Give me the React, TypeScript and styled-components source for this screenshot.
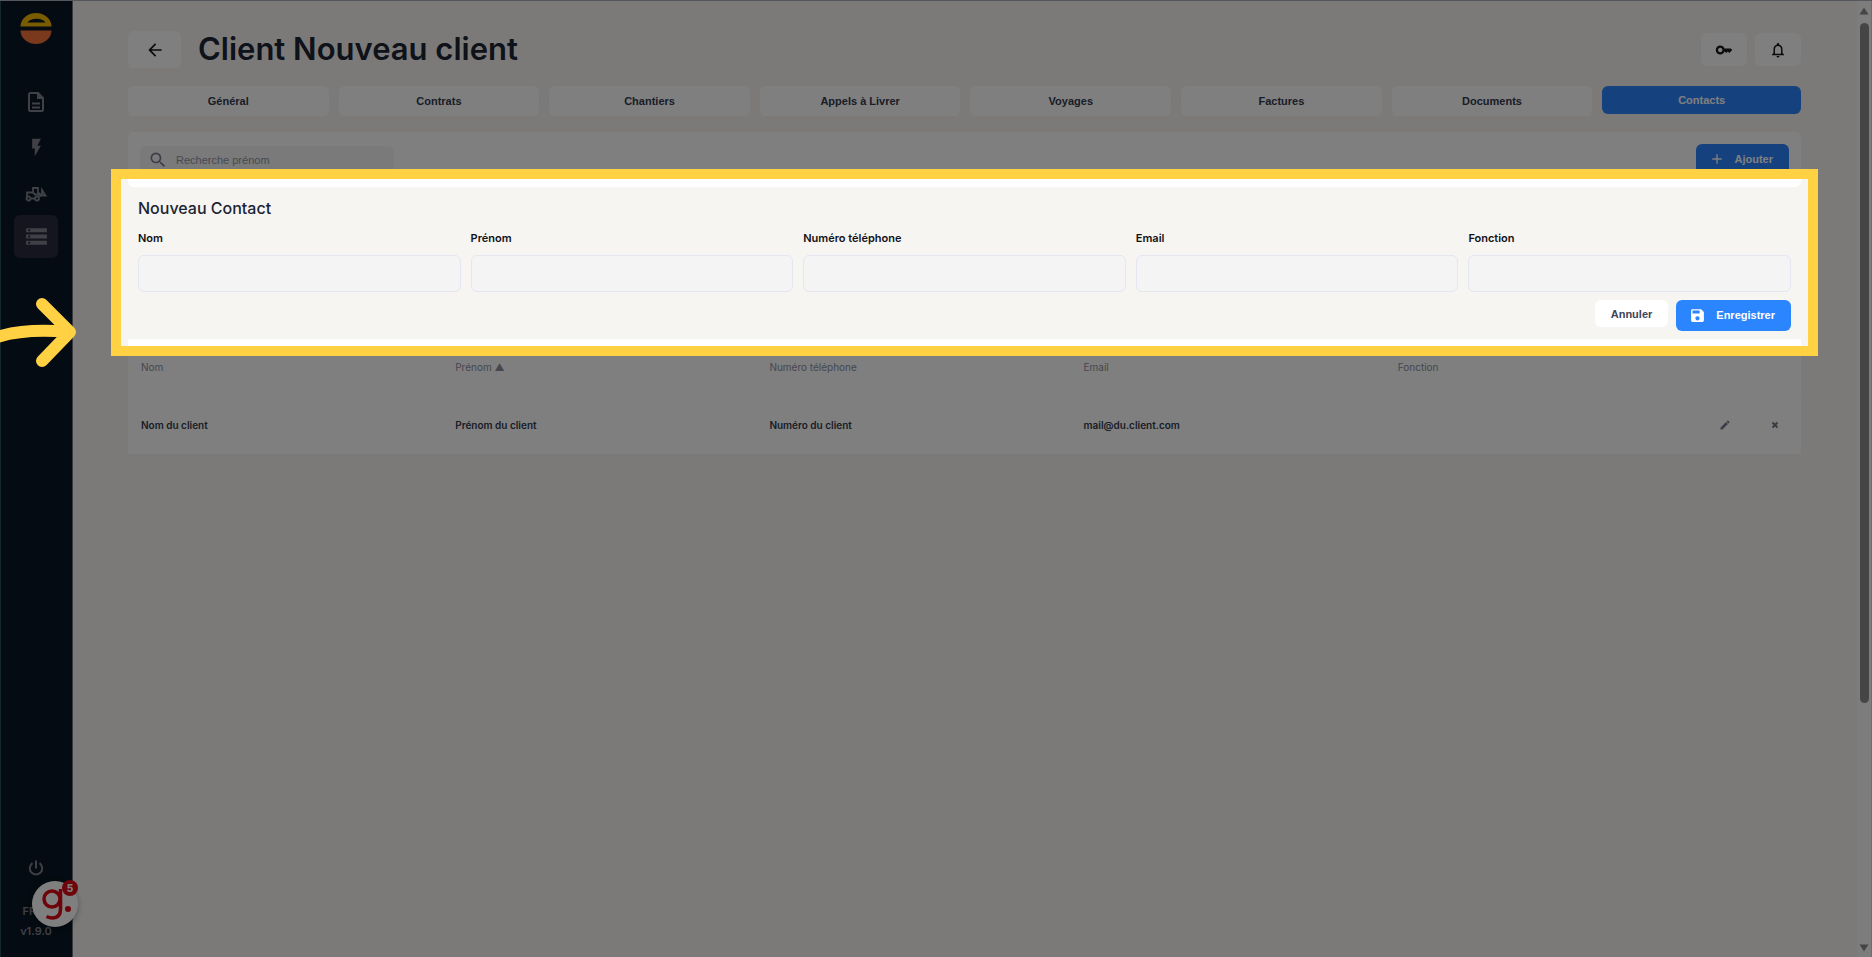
import React from "react";
import styled, { createGlobalStyle, css } from "styled-components";
import {
  MdAdd,
  MdArrowBack,
  MdEdit,
  MdFlashOn,
  MdKey,
  MdOutlineNotifications,
  MdSave,
  MdSearch,
  MdStorage,
} from "react-icons/md";

const INTER = `Inter, "Liberation Sans", sans-serif`;
const ARIAL = `"Liberation Sans", Arial, sans-serif`;

const GlobalStyle = createGlobalStyle`
  *, *::before, *::after { box-sizing: border-box; }
  body { margin: 0; background: #f7f5f1; font-family: ${INTER}; color: #1c2434; overflow: hidden; }
  button, input { font: inherit; color: inherit; margin: 0; }
  button { border: 0; padding: 0; cursor: pointer; }
  h1, h2 { margin: 0; }
`;

const Shell = styled.div`
  position: relative;
  display: flex;
  min-height: 100vh;
  overflow: hidden;
  border-top: 1px solid #54575c;
`;

const Sidebar = styled.nav`
  display: flex;
  flex-direction: column;
  align-items: center;
  flex: 0 0 73px;
  padding: 12px 1px 16px 0;
  background: #081724;
  border-left: 1px solid #245058;
  border-right: 1px solid #70757b;
  color: #80808f;
`;

const NavList = styled.div`
  display: flex;
  flex-direction: column;
  align-items: center;
  margin-top: 36px;
`;

const NavLink = styled.a<{ $active?: boolean }>`
  display: flex;
  align-items: center;
  justify-content: center;
  width: 44px;
  height: 43px;
  margin-top: ${(p) => (p.$active ? 0 : 3)}px;
  border-radius: 6px;
  color: inherit;
  background: ${(p) => (p.$active ? "#282a3c" : "transparent")};
  &:first-child { margin-top: 0; }
`;

const SidebarFoot = styled.div`
  display: flex;
  flex-direction: column;
  align-items: center;
  margin-top: auto;
  font-size: 11px;
  line-height: 20px;
  font-weight: 600;
`;

const PowerButton = styled.button`
  display: flex;
  margin-bottom: 24px;
  background: none;
`;

const Language = styled.span`
  width: 27px;
`;

const Main = styled.main`
  flex: 1;
  min-width: 0;
  padding: 30px 56px 0 55px;
`;

const Header = styled.header`
  display: flex;
  align-items: center;
  height: 37px;
  margin-bottom: 18px;
`;

const Title = styled.h1`
  flex: 1;
  margin-left: 17px;
  padding-bottom: 2px;
  font-size: 31px;
  line-height: 36px;
  font-weight: 600;
`;

const IconButton = styled.button<{ $wide?: boolean }>`
  display: flex;
  align-items: center;
  justify-content: center;
  width: ${(p) => (p.$wide ? 53 : 46)}px;
  height: ${(p) => (p.$wide ? 37 : 33)}px;
  margin-left: ${(p) => (p.$wide ? 0 : 8)}px;
  border-radius: 6px;
  background: #fff;
  color: #16181c;
`;

const Tabs = styled.div`
  display: grid;
  grid-template-columns: repeat(7, 201fr) 199fr;
  align-items: start;
  gap: 10px;
  margin-bottom: 16px;
`;

const Tab = styled.button<{ $active?: boolean }>`
  height: ${(p) => (p.$active ? 28 : 30)}px;
  border-radius: 6px;
  font: bold 11px/16px ${ARIAL};
  background: ${(p) => (p.$active ? "#2a85ff" : "#fff")};
  color: ${(p) => (p.$active ? "#fff" : "#333a4e")};
`;

const Toolbar = styled.div`
  display: flex;
  align-items: flex-start;
  justify-content: space-between;
  height: 55px;
  padding: 12px;
  border-radius: 6px;
  background: #fff;
`;

const Search = styled.label`
  display: flex;
  align-items: center;
  gap: 8px;
  width: 254px;
  height: 28px;
  margin-top: 2px;
  padding-left: 8px;
  border-radius: 6px;
  background: #f4f4f4;
  color: #777c8c;
`;

const SearchInput = styled.input`
  flex: 1;
  min-width: 0;
  padding: 0;
  border: 0;
  background: none;
  font: 11px/16px ${ARIAL};
  &::placeholder { color: #8c93a3; opacity: 1; }
`;

const button = css`
  display: flex;
  align-items: center;
  justify-content: center;
  border-radius: 6px;
  font: bold 11px/16px ${ARIAL};
`;

const PrimaryButton = styled.button`
  ${button}
  gap: 10px;
  height: 31px;
  padding: 0 16px 1px 13px;
  background: #2a85ff;
  color: #fff;
`;

const PlainButton = styled.button`
  ${button}
  height: 27px;
  padding: 0 16px;
  background: #fff;
  color: #404358;
`;

const FormSection = styled.form`
  position: relative;
  z-index: 1;
  padding: 11px 10px 8px;
  background: #f6f5f1;
`;

const FormTitle = styled.h2`
  font-size: 16px;
  line-height: 20px;
  font-weight: 500;
`;

const Fields = styled.div`
  display: grid;
  grid-template-columns: repeat(5, 1fr);
  gap: 10px;
  margin-top: 12px;
`;

const Field = styled.label`
  display: flex;
  flex-direction: column;
  gap: 9px;
  font-size: 11px;
  line-height: 16px;
  font-weight: 600;
  color: #111217;
`;

const TextInput = styled.input`
  width: 100%;
  height: 37px;
  padding: 0 10px;
  border: 1px solid #e4e6f1;
  border-radius: 6px;
  background: #f4f4f4;
`;

const Actions = styled.div`
  display: flex;
  align-items: flex-start;
  justify-content: flex-end;
  gap: 8px;
  margin-top: 8px;
`;

const Spotlight = styled.div`
  position: absolute;
  inset: -18px -17px -17px;
  border: 10px solid #ffd143;
  box-shadow: 0 0 0 9999px rgba(0, 0, 0, 0.5);
  pointer-events: none;
`;

const Contacts = styled.table`
  width: 100%;
  border-collapse: collapse;
  table-layout: fixed;
  background: #fff;
  text-align: left;
`;

const HeadCell = styled.th`
  height: 57px;
  padding: 0 13px;
  border-bottom: 1px solid #fcfcfd;
  font-size: 10px;
  line-height: 16px;
  font-weight: 400;
  color: #8a8f9e;
`;

const ActionHead = styled(HeadCell)`
  width: 102px;
`;

const Cell = styled.td`
  height: 58px;
  padding: 0 13px;
  font-size: 10px;
  line-height: 16px;
  font-weight: 600;
  color: #333a4e;
`;

const RowActions = styled.div`
  display: flex;
  align-items: center;
  justify-content: space-between;
  padding: 0 8px 0 7px;
`;

const RowButton = styled.button`
  display: flex;
  background: none;
  color: #75778b;
`;

const Scrollbar = styled.div`
  display: flex;
  flex-direction: column;
  align-items: center;
  flex: 0 0 15px;
  padding: 6px 0 5px;
  border-right: 1px solid #d8d8e4;
  background: #fafafa;
`;

const Thumb = styled.div`
  flex: 0 0 72%;
  width: 9px;
  margin-top: 8px;
  border-radius: 5px;
  background: #8b8b8b;
`;

const ScrollArrow = styled.svg<{ $bottom?: boolean }>`
  flex: none;
  margin-top: ${(p) => (p.$bottom ? "auto" : 0)};
  fill: #8b8b8b;
`;

const Pointer = styled.svg`
  position: absolute;
  z-index: 2;
  left: 0;
  top: 296px;
  pointer-events: none;
`;

const ChatBubble = styled.button`
  position: absolute;
  left: 32px;
  bottom: 30px;
  width: 46px;
  height: 46px;
  border-radius: 50%;
  background: #fff;
  box-shadow: 0 2px 6px rgba(0, 0, 0, 0.3);
`;

const Badge = styled.span`
  position: absolute;
  top: -1px;
  right: 0;
  width: 16px;
  height: 16px;
  border-radius: 50%;
  background: #dc0814;
  color: #fff;
  font: 800 10px/16px ${INTER};
  text-align: center;
`;

const Logo = () => (
  <svg width="32" height="31" viewBox="0 0 32 31" aria-hidden="true">
    <path d="M.5 13.500a15.500 13.500 0 0 1 31 0zM7.500 9.500h18a10 6.500 0 0 0-18 0z" fill="#f5b800" fillRule="evenodd" />
    <path d="M.5 17.500h31a15.500 13.500 0 0 1-31 0z" fill="#f47238" />
  </svg>
);

const DocumentIcon = () => (
  <svg width="18" height="22" viewBox="0 0 18 22" fill="none" stroke="currentColor" strokeWidth="2" aria-hidden="true">
    <path d="M3.500 2H11l5 5v11.500a1.500 1.500 0 0 1-1.500 1.500h-11A1.500 1.500 0 0 1 2 18.500v-15A1.500 1.500 0 0 1 3.500 2zM5 12.500h8M5 16.500h8" />
    <path d="M10 1v7h7z" fill="currentColor" stroke="none" />
  </svg>
);

const LoaderIcon = () => (
  <svg width="22" height="16" viewBox="0 0 22 16" fill="none" stroke="currentColor" strokeWidth="1.800" aria-hidden="true">
    <path d="M5.500 12.500h4M2 11V6.500h6V2h5v4.500l2 1.500v3M8 6.500l2 2h5M14.500 9.500h2.500V4l3.500 5.500h-3.500" />
    <circle cx="3.500" cy="12.500" r="2" />
    <circle cx="12" cy="12.500" r="2" />
  </svg>
);

const PowerIcon = () => (
  <svg width="18" height="18" viewBox="0 0 18 18" fill="none" stroke="currentColor" strokeWidth="2" aria-hidden="true">
    <path d="M9 1.500v8M5.500 4.200a6.200 6.200 0 1 0 7 0" />
  </svg>
);

const CrossIcon = () => (
  <svg width="10" height="10" viewBox="0 0 10 10" fill="none" stroke="currentColor" strokeWidth="2" aria-hidden="true">
    <path d="M2.500 2.500l5 5M7.500 2.500l-5 5" />
  </svg>
);

const ChatLogo = () => (
  <svg width="46" height="46" viewBox="0 0 46 46" fill="none" stroke="#dc0814" strokeWidth="3.500" aria-hidden="true">
    <circle cx="20" cy="18" r="8" />
    <path d="M28.500 8v20c0 6-3 9-8 9-2 0-4-.5-6-1.500" />
    <circle cx="36" cy="28" r="3" fill="#dc0814" stroke="none" />
  </svg>
);

const tabs = ["Général", "Contrats", "Chantiers", "Appels à Livrer", "Voyages", "Factures", "Documents", "Contacts"];
const fields = ["Nom", "Prénom", "Numéro téléphone", "Email", "Fonction"];
const columns = ["Nom", "Prénom ▲", "Numéro téléphone", "Email", "Fonction"];
const contact = ["Nom du client", "Prénom du client", "Numéro du client", "mail@du.client.com", ""];

export default function App() {
  return (
    <Shell>
      <GlobalStyle />
      <Sidebar aria-label="Navigation">
        <Logo />
        <NavList>
          <NavLink href="#documents" aria-label="Documents"><DocumentIcon /></NavLink>
          <NavLink href="#actions" aria-label="Actions"><MdFlashOn size={21} /></NavLink>
          <NavLink href="#engins" aria-label="Engins"><LoaderIcon /></NavLink>
          <NavLink href="#donnees" aria-label="Données" $active><MdStorage size={25} /></NavLink>
        </NavList>
        <SidebarFoot>
          <PowerButton aria-label="Déconnexion"><PowerIcon /></PowerButton>
          <Language>FR</Language>
          <span>v1.9.0</span>
        </SidebarFoot>
      </Sidebar>

      <Main>
        <Header>
          <IconButton $wide aria-label="Retour"><MdArrowBack size={20} /></IconButton>
          <Title>Client Nouveau client</Title>
          <IconButton aria-label="Accès"><MdKey size={18} /></IconButton>
          <IconButton aria-label="Notifications"><MdOutlineNotifications size={18} /></IconButton>
        </Header>

        <Tabs>
          {tabs.map((name) => (
            <Tab key={name} $active={name === "Contacts"}>{name}</Tab>
          ))}
        </Tabs>

        <Toolbar>
          <Search>
            <MdSearch size={20} />
            <SearchInput placeholder="Recherche prénom" aria-label="Recherche prénom" />
          </Search>
          <PrimaryButton><MdAdd size={16} />Ajouter</PrimaryButton>
        </Toolbar>

        <FormSection onSubmit={(e) => e.preventDefault()}>
          <FormTitle>Nouveau Contact</FormTitle>
          <Fields>
            {fields.map((name) => (
              <Field key={name}>{name}<TextInput /></Field>
            ))}
          </Fields>
          <Actions>
            <PlainButton type="button">Annuler</PlainButton>
            <PrimaryButton><MdSave size={17} />Enregistrer</PrimaryButton>
          </Actions>
          <Spotlight />
        </FormSection>

        <Contacts>
          <thead>
            <tr>
              {columns.map((name) => <HeadCell key={name}>{name}</HeadCell>)}
              <ActionHead aria-label="Actions" />
            </tr>
          </thead>
          <tbody>
            <tr>
              {contact.map((value, i) => <Cell key={columns[i]}>{value}</Cell>)}
              <Cell>
                <RowActions>
                  <RowButton aria-label="Modifier"><MdEdit size={12} /></RowButton>
                  <RowButton aria-label="Supprimer"><CrossIcon /></RowButton>
                </RowActions>
              </Cell>
            </tr>
          </tbody>
        </Contacts>
      </Main>

      <Scrollbar aria-hidden="true">
        <ScrollArrow width="10" height="8" viewBox="0 0 10 8"><path d="M5 0.500 9.500 7.500h-9z" /></ScrollArrow>
        <Thumb />
        <ScrollArrow $bottom width="10" height="8" viewBox="0 0 10 8"><path d="M5 7.500 9.500 0.500h-9z" /></ScrollArrow>
      </Scrollbar>

      <ChatBubble aria-label="Aide">
        <ChatLogo />
        <Badge>5</Badge>
      </ChatBubble>

      <Pointer width="78" height="72" viewBox="0 0 78 72" fill="none" stroke="#ffd143" strokeWidth="12" strokeLinecap="round" strokeLinejoin="round" aria-hidden="true">
        <path d="M-6 41Q24 31 68 35M42 7l28 28-28 29" />
      </Pointer>
    </Shell>
  );
}
